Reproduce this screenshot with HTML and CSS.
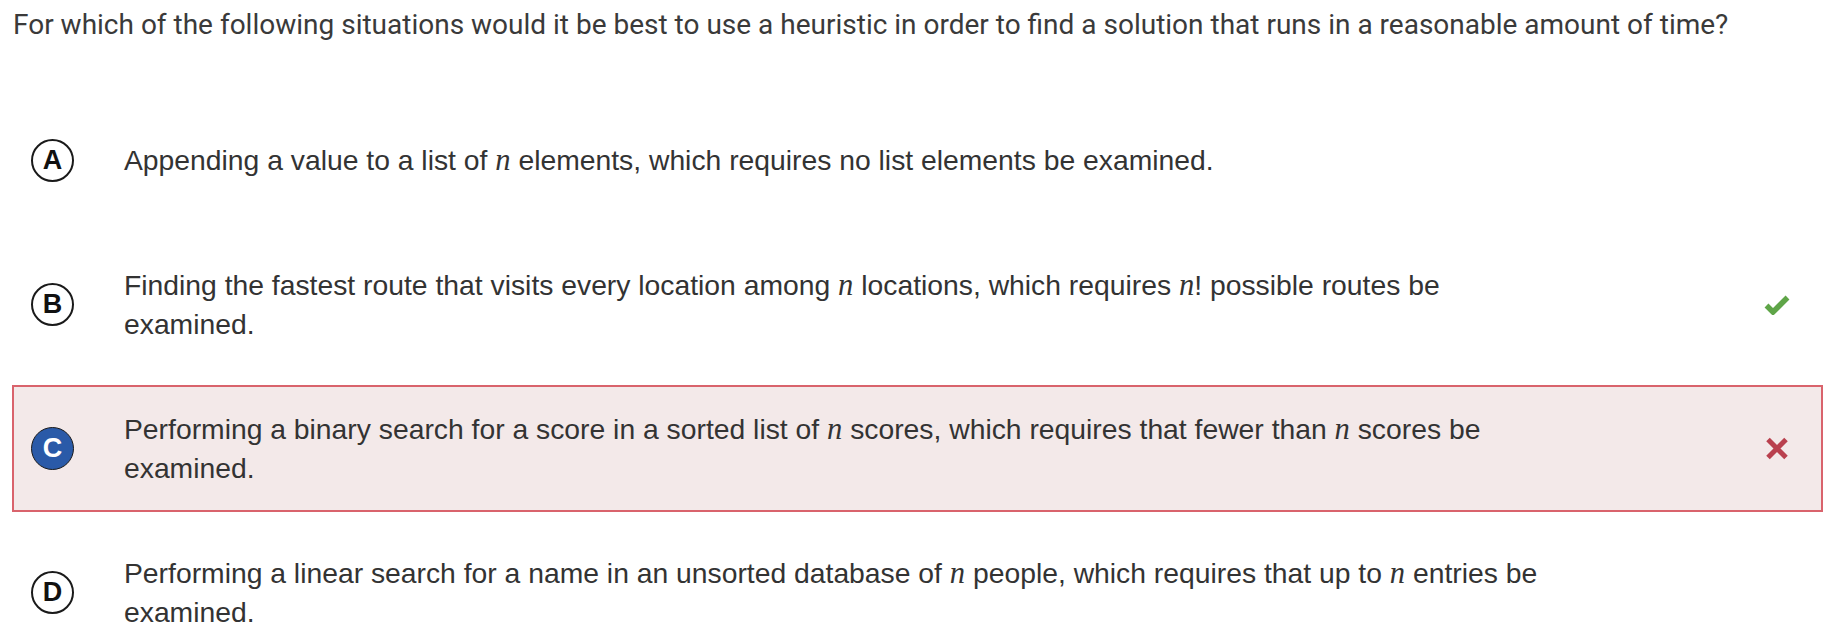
FILE: index.html
```html
<!doctype html>
<html>
  <head>
    <meta charset="utf-8">
    <title>Heuristic question</title>
    <link rel="stylesheet" href="styles.css">
  </head>
  <body>
    <div class="page">
      <p class="question">For which of the following situations would it be best to use a heuristic in order to find a solution that runs in a reasonable amount of time?</p>

      <ul class="choices">
        <li class="choice">
          <span class="letter">A</span>
          <div class="text">Appending a value to a list of <i class="math">n</i> elements, which requires no list elements be examined.</div>
          <span class="mark"></span>
        </li>
        <li class="choice">
          <span class="letter">B</span>
          <div class="text">Finding the fastest route that visits every location among <i class="math">n</i> locations, which requires <i class="math">n</i>! possible routes be examined.</div>
          <span class="mark">
            <svg class="icon-check" width="26" height="20" viewBox="0 0 26 20"><path d="M2.5 10.5 L9 17 L23.5 2.5" fill="none" stroke="currentColor" stroke-width="5.5"/></svg>
          </span>
        </li>
        <li class="choice choice-wrong">
          <span class="letter">C</span>
          <div class="text">Performing a binary search for a score in a sorted list of <i class="math">n</i> scores, which requires that fewer than <i class="math">n</i> scores be examined.</div>
          <span class="mark">
            <svg class="icon-cross" width="24" height="23" viewBox="0 0 24 23"><path d="M3 2.5 L21 20.5 M21 2.5 L3 20.5" fill="none" stroke="currentColor" stroke-width="5"/></svg>
          </span>
        </li>
        <li class="choice">
          <span class="letter">D</span>
          <div class="text">Performing a linear search for a name in an unsorted database of <i class="math">n</i> people, which requires that up to <i class="math">n</i> entries be examined.</div>
          <span class="mark"></span>
        </li>
      </ul>
    </div>
  </body>
</html>
```

FILE: styles.css
```css
* {
  box-sizing: border-box;
}

html,
body {
  margin: 0;
  padding: 0;
  background: #fff;
  overflow: hidden;
}
body {
  font-family: "Liberation Sans", Arial, sans-serif;
  color: #333;
  -webkit-font-smoothing: antialiased;
}
.page {
  padding: 0 13px 0 12px;
}
.question {
  margin: 0;
  padding: 7px 0 0 1px;
  font-family: Roboto, "Liberation Sans", sans-serif;
  font-size: 28px;
  line-height: 36px;
  color: #3a3a3a;
}
.choices {
  list-style: none;
  margin: 54px 0 0;
  padding: 0;
}
.choice {
  display: flex;
  align-items: center;
  min-height: 127px;
  margin-bottom: 17px;
  padding: 0 16px 0 17px;
  border: 2px solid transparent;
}
.choice-wrong {
  background: #f3e9e9;
  border-color: #d9636c;
}
.letter {
  flex: 0 0 43px;
  height: 43px;
  border: 2px solid #1a1a1a;
  border-radius: 50%;
  display: flex;
  align-items: center;
  justify-content: center;
  font-weight: bold;
  font-size: 27px;
  color: #111;
}
.choice-wrong .letter {
  background: #2a5aa8;
  color: #fff;
  border-width: 1.5px;
}
.text {
  flex: 0 1 1430px;
  margin-left: 50px;
  font-size: 28.3px;
  line-height: 39px;
}
.math {
  font-family: "Liberation Serif", "Times New Roman", serif;
  font-style: italic;
  font-size: 1.08em;
  line-height: 1;
}
.mark {
  margin-left: auto;
  width: 56px;
  display: flex;
  justify-content: center;
}
.icon-check {
  color: #5fa548;
}
.icon-cross {
  color: #b9404e;
}
```
